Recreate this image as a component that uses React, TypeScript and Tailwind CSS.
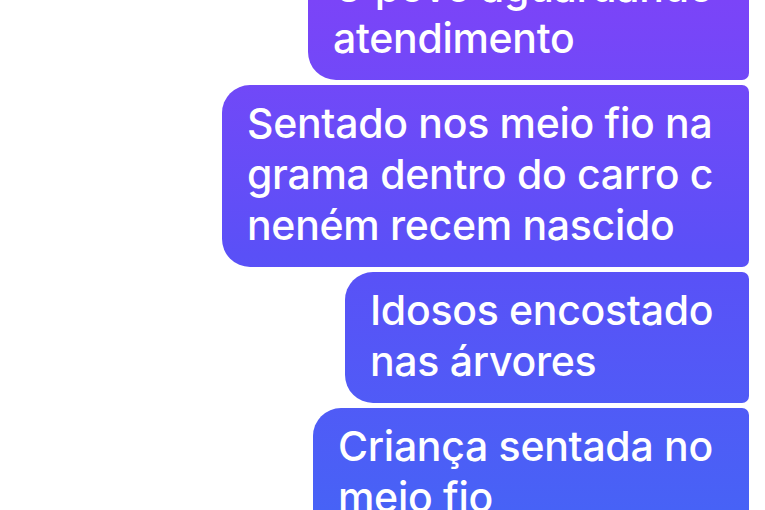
import React from 'react';

interface Message {
    lines: string[];
    width: string;
}

const messages: Message[] = [
    { lines: ['O povo aguardando', 'atendimento'], width: 'w-[441px]' },
    { lines: ['Sentado nos meio fio na', 'grama dentro do carro c', 'neném recem nascido'], width: 'w-[527px]' },
    { lines: ['Idosos encostado', 'nas árvores'], width: 'w-[404px]' },
    { lines: ['Criança sentada no', 'meio fio'], width: 'w-[436px]' },
];

const Bubble: React.FC<{ message: Message }> = ({ message }) => {
    return (
        <div
            className={`${message.width} rounded-l-[28px] rounded-r-[7px] bg-linear-to-b from-[#7b44f8] via-[#5a50f7] to-[#4762f6] bg-fixed pt-[13px] pb-[16px] pl-[25px] pr-[10px] text-white`}
        >
            {message.lines.map((line) => (
                <div
                    key={line}
                    className="whitespace-nowrap text-[41px] leading-[51px] font-medium tracking-[-0.3px]"
                    style={{ fontFamily: 'Inter, "Noto Sans", sans-serif' }}
                >
                    {line}
                </div>
            ))}
        </div>
    );
};

export default function App() {
    return (
        <div className="h-[510px] w-[765px] overflow-hidden bg-white">
            <div className="-mt-[51px] flex flex-col items-end gap-[5px] pr-[16px]">
                {messages.map((m, i) => (
                    <Bubble key={i} message={m} />
                ))}
            </div>
        </div>
    );
}
